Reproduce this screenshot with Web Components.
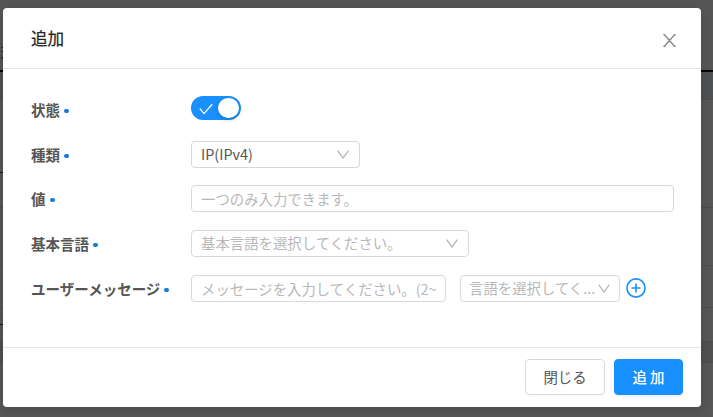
<!DOCTYPE html>
<html lang="ja"><head><meta charset="utf-8"><title>追加</title>
<style>
html,body{margin:0;width:713px;height:417px;overflow:hidden}
body{font-family:"Noto Sans CJK JP",sans-serif;font-size:14.4px;line-height:20px;color:#555}
</style></head><body>
<app-screen>
<modal-dialog heading="追加">
<form-row label="状態" style="--h:28px;--gap:19px;--ly:3px"><toggle-switch></toggle-switch></form-row>
<form-row label="種類" style="--gap:17px"><select-box style="--w:169px;--ink:#555;--dy:-1px">IP(IPv4)</select-box></form-row>
<form-row label="値" style="--gap:18px"><text-field style="--w:483px">一つのみ入力できます。</text-field></form-row>
<form-row label="基本言語" style="--gap:18px;"><select-box style="--w:278px;--dy:-1px">基本言語を選択してください。</select-box></form-row>
<form-row label="ユーザーメッセージ"><text-field style="--w:255px">メッセージを入力してください。(2~100)</text-field><select-box style="--w:160px;margin-left:14px;--pl:8px;--arrow:12px;--ar:9px;--dy:-1px">言語を選択してく...</select-box><add-button></add-button></form-row>
<action-button slot="footer" style="--w:80px">閉じる</action-button>
<action-button slot="footer" primary style="--w:69px">追 加</action-button>
</modal-dialog>
</app-screen>
<script>
const define=(name,html,init)=>customElements.define(name,class extends HTMLElement{
  constructor(){super();const t=document.createElement('template');t.innerHTML=html;
    this.attachShadow({mode:'open'}).append(t.content.cloneNode(true));}
  connectedCallback(){if(init)init(this,this.shadowRoot);}
});
define('app-screen',`<style>
:host{display:grid;width:713px;height:417px;background:#575757}
.page,.stage{grid-area:1/1;min-width:0}
.page{display:flex;flex-direction:column}
.page div{box-sizing:border-box;border-bottom:1px solid #4d4d4d;flex:none}
.page .top{height:72px;border-bottom:2px solid #050505;background:#555}
.page .head{height:28px;background:#505153}
.marks{display:flex;flex-direction:column;grid-area:1/1;width:3px}
.marks i{height:1px;background:#161616;flex:none}
.marks .s{width:2px;margin-left:1px;background:#2e2a28}
.stage{padding:8px 12px 10px 3px;z-index:1}
</style><div class="page"><div class="top"></div><div class="head"></div><div style="height:108px"></div><div style="height:58px"></div><div style="height:42px"></div><div style="height:34px"></div><div style="height:21px;background:#505050"></div></div>
<div class="marks"><i class="s" style="margin-top:47px"></i><i class="s" style="margin-top:3px"></i><i class="s" style="margin-top:5px;height:2px"></i><i style="margin-top:113px"></i><i style="margin-top:151px"></i></div>
<div class="stage"><slot></slot></div>`);
define('modal-dialog',`<style>
:host{display:flex;flex-direction:column;box-sizing:border-box;width:698px;height:399px;background:#fff;border-radius:4px;box-shadow:0 4px 12px rgba(0,0,0,.15)}
header{box-sizing:border-box;height:61px;border-bottom:1px solid #e8e8e8;display:flex;align-items:center;justify-content:space-between;padding:0 25px 0 28px;flex:none}
h1{margin:0 0 1px;font-size:16.6px;line-height:24px;font-weight:400;color:#222;-webkit-text-stroke:.2px #222}
svg{width:13px;height:13px;margin-top:5px}
main{flex:1;padding:25px 27px 0 28px}
footer{box-sizing:border-box;height:60px;border-top:1px solid #e8e8e8;display:flex;justify-content:flex-end;gap:9px;padding:11px 18px 0 0}
</style><header><h1></h1><svg viewBox="0 0 13 13" fill="none" stroke="#858585" stroke-width="1.3"><path d="M1.4 .7 11.6 12.3M11.6 .7 1.4 12.3M.3 .6h2M10.7 .6h2M.3 12.4h2M10.7 12.4h2"/></svg></header><main><slot></slot></main><footer><slot name="footer"></slot></footer>`,
(e,s)=>s.querySelector('h1').textContent=e.getAttribute('heading'));
define('form-row',`<style>
:host{display:flex;align-items:center;height:var(--h,27px);margin-bottom:var(--gap,0)}
.label{width:160px;flex:none;display:flex;align-items:center;font-size:14.5px;font-weight:700;color:#555;white-space:nowrap;padding-top:var(--ly,0)}
i{width:5px;height:4px;border-radius:2px;background:#1678dc;margin:3px 0 0 4px}
</style><div class="label"><span></span><i></i></div><slot></slot>`,
(e,s)=>s.querySelector('span').textContent=e.getAttribute('label'));
define('toggle-switch',`<style>
:host{display:flex;align-items:center;justify-content:space-between;box-sizing:border-box;width:50px;height:24px;border-radius:12px;background:#1890ff;padding:0 2px 0 8px}
b{width:21px;height:20px;border-radius:10px;background:#fff;box-shadow:0 2px 4px rgba(0,35,11,.2)}
svg{width:14px;height:12px;margin-top:1px}
</style><svg viewBox="0 0 14 12" fill="none" stroke="#fff" stroke-width="1.3"><path d="M.8 5.5 5 10.6 13.2 1.2"/></svg><b></b>`);
const box=`:host{display:flex;align-items:center;box-sizing:border-box;width:var(--w);height:27px;border:1px solid #d9d9d9;border-radius:4px;background:#fff;padding:0 8px 0 var(--pl,9px);flex:none;color:var(--ink,#b8b8b8);white-space:nowrap}
span{flex:1;min-width:0;overflow:hidden;line-height:22px;font-weight:400}`;
define('text-field',`<style>${box} span{margin-top:1px}</style><span><slot></slot></span>`);
define('select-box',`<style>${box}
:host{padding-right:var(--ar,10px)}
span{margin-top:var(--dy,0);overflow:visible}
svg{width:var(--arrow,12px);height:9px;flex:none;margin-top:-1px}
</style><span><slot></slot></span><svg viewBox="0 0 12 9" fill="none" stroke="#b8b8b8" stroke-width="1.3"><path d="M.6 .6 6 8 11.4 .6"/></svg>`);
define('add-button',`<style>
:host{display:block;width:20px;height:20px;margin:-1px 0 0 6px}svg{display:block}
</style><svg width="20" height="20" viewBox="0 0 20 20" fill="none" stroke="#1890ff" stroke-width="1.6"><circle cx="10" cy="10" r="9.1"/><path d="M5.6 10h8.8M10 5.6v8.8"/></svg>`);
define('action-button',`<style>
:host{display:flex;align-items:center;justify-content:center;box-sizing:border-box;width:var(--w);height:36px;border:1px solid #d9d9d9;border-radius:4px;background:#fff;color:#555;box-shadow:0 2px 0 rgba(0,0,0,.02);white-space:nowrap}
:host([primary]){background:#1890ff;border-color:#1890ff;color:#fff;font-weight:500;box-shadow:0 2px 0 rgba(0,0,0,.045)}
span{line-height:20px;margin-top:0}
</style><span><slot></slot></span>`);
</script></body></html>
